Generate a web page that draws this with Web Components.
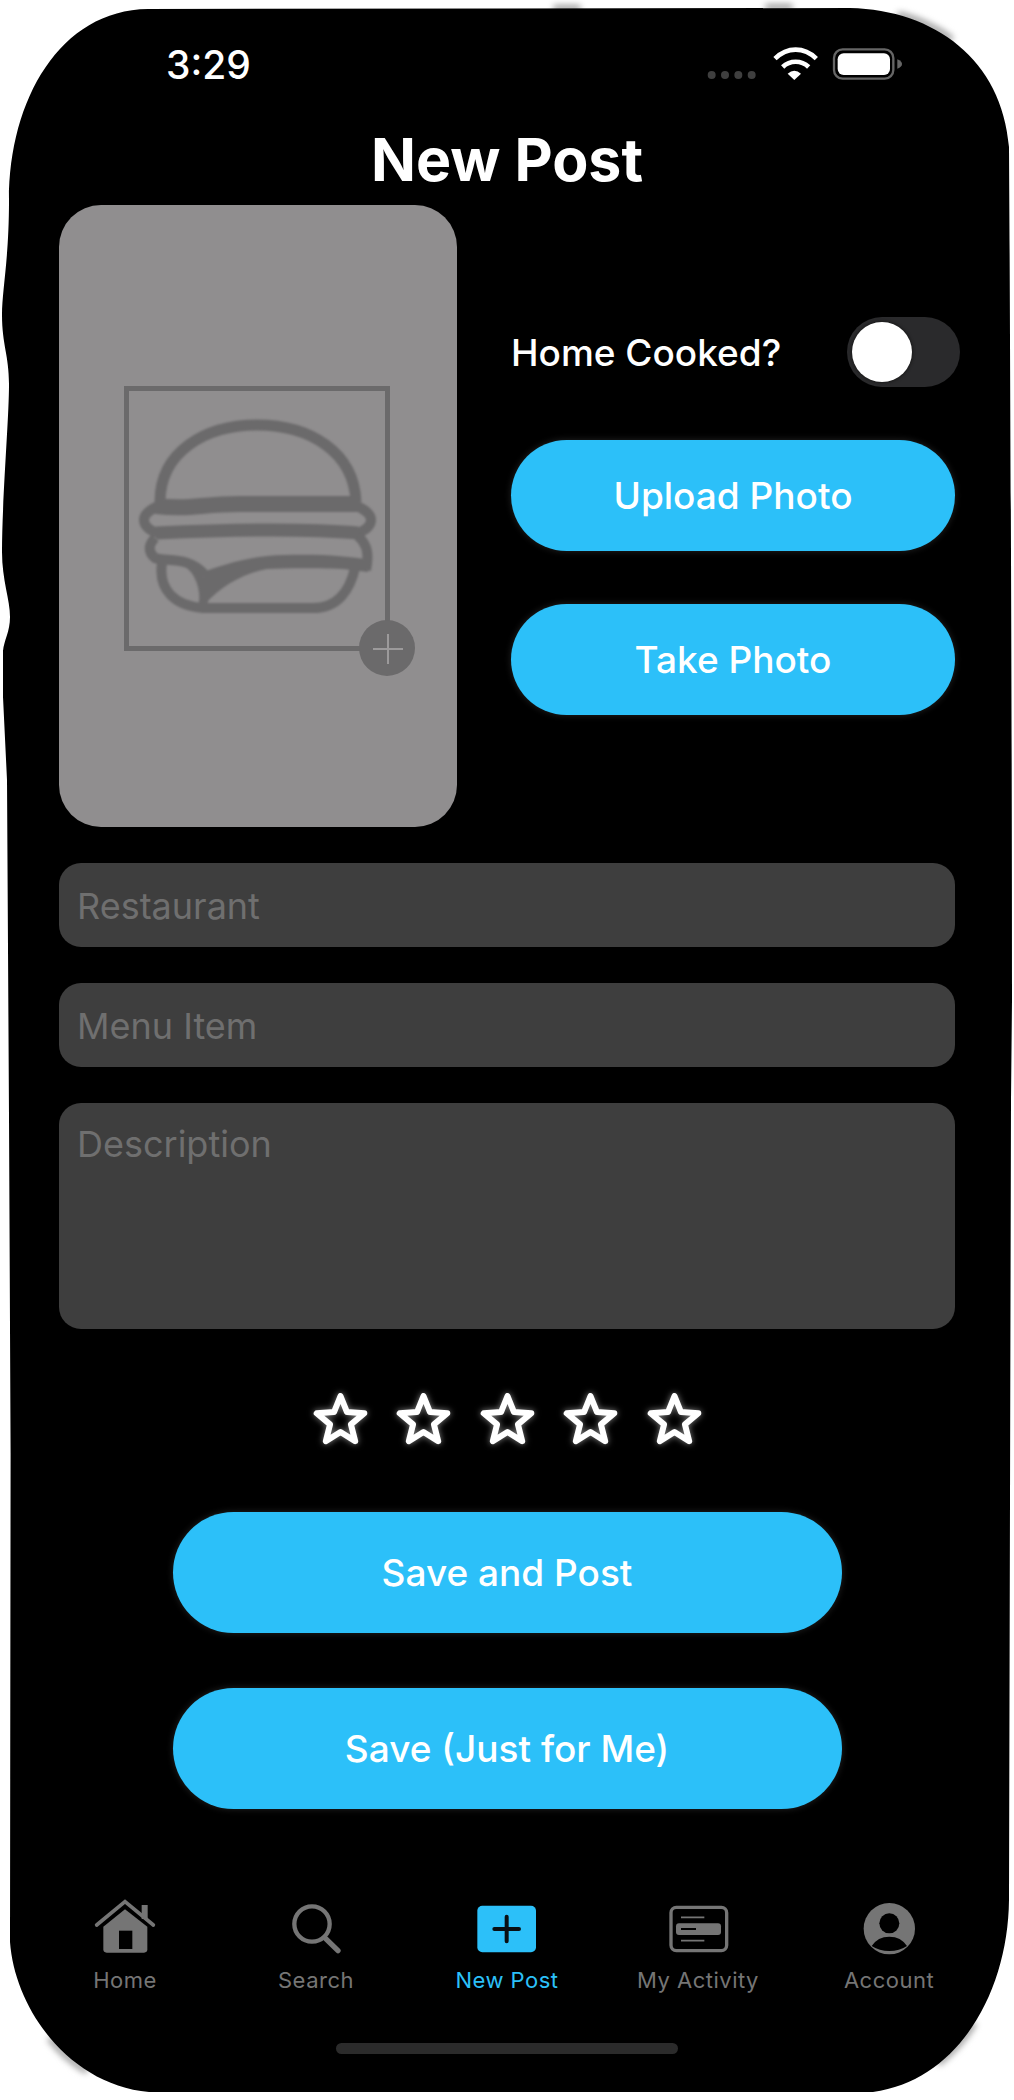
<!DOCTYPE html>
<html lang="en">

<head>
  <meta charset="UTF-8">
  <meta name="viewport" content="width=device-width, initial-scale=1.0">
  <title>New Post</title>
<style>
  body {
    margin: 0;
    background: #fff;
    font-family: Inter, "Noto Sans", sans-serif;
  }
</style>
</head>

<body>

<template id="phoneshadow">
  <style>
    :host {
      position: absolute;
      left: 0;
      top: 0;
    }
    svg { display: block; }
  </style>
  <svg width="1014" height="2100" viewBox="0 0 1014 2100" fill="none" stroke="#9a9a9a" stroke-width="6" stroke-linecap="round">
    <g style="filter: blur(3px)">
      <path d="M556 8H578M768 7H790"/>
      <path d="M900 15C920 20 936 28 950 38"/>
      <path d="M51 2040C60 2052 72 2062 85 2070"/>
      <path d="M940 2062C952 2052 964 2040 973 2025"/>
    </g>
  </svg>
</template>

<template id="phoneframe">
  <style>
    :host {
      display: block;
      position: relative;
      width: 1014px;
      height: 2100px;
      overflow: hidden;
      background: #000;
      color: #fff;
      clip-path: path("M148 9 L850 8 C935 10 1002 60 1009 147 C1010 300 1012 700 1012 1000 L1011 1100 L1009 1900 C1008 1990 960 2080 873 2092 L149 2092 C70 2085 15 2010 10 1942 L10.6 1453 L9 1117 L7 780 L3 697 L3 651 C4 640 10 632 10 617 C10 600 2 580 2 552 C2 500 9 420 9 384 C9 355 2 345 2 315 C2 290 9 260 9 200 C9 100 60 10 148 9 Z");
    }
  </style>
  <slot></slot>
</template>

<template id="statusbar">
  <style>
    :host {
      display: flex;
      justify-content: space-between;
      height: 90px;
      padding: 44px 90px 0 166px;
      box-sizing: border-box;
    }
    .time {
      font-size: 39px;
      font-weight: 500;
      line-height: 42px;
    }
    svg { display: block; }
  </style>
  <div class="time"><slot></slot></div>
  <svg width="230" height="42" viewBox="0 0 690 126" fill="none">
    <g fill="#3f3f3f">
      <circle cx="53" cy="93" r="12"/><circle cx="93" cy="93" r="12"/>
      <circle cx="133" cy="93" r="12"/><circle cx="173" cy="93" r="12"/>
    </g>
    <g stroke="#fff" stroke-width="14">
      <path d="M243 44C280 8 330 8 367 44"/>
      <path d="M266 69C288 48 322 48 344 69"/>
    </g>
    <path d="M281 89Q301 72 321 89L301 108Z" fill="#fff"/>
    <rect x="420" y="16" width="178" height="88" rx="26" stroke="#666" stroke-width="7"/>
    <rect x="431" y="28" width="157" height="65" rx="18" fill="#fff"/>
    <path d="M610 46C620 50 624 56 624 60C624 66 620 70 610 74Z" fill="#666"/>
  </svg>
</template>

<template id="pagetitle">
  <style>
    :host {
      display: block;
      height: 115px;
      text-align: center;
      font-size: 59px;
      font-weight: 700;
      line-height: 70px;
      padding-top: 35px;
      box-sizing: border-box;
    }
  </style>
  <slot></slot>
</template>

<template id="postform">
  <style>
    :host {
      display: flex;
      flex-direction: column;
      padding: 0 59px;
    }
    .top {
      display: flex;
      justify-content: space-between;
    }
    .side {
      display: flex;
      flex-direction: column;
      width: 444px;
      padding-top: 112px;
      gap: 53px;
    }
    .fields {
      display: flex;
      flex-direction: column;
      gap: 36px;
      margin-top: 36px;
    }
    .save {
      display: flex;
      flex-direction: column;
      align-items: center;
      gap: 55px;
      margin-top: 67px;
    }
  </style>
  <div class="top">
    <slot name="photo"></slot>
    <div class="side"><slot name="side"></slot></div>
  </div>
  <div class="fields"><slot name="field"></slot></div>
  <slot name="rating"></slot>
  <div class="save"><slot name="save"></slot></div>
</template>

<template id="photopicker">
  <style>
    :host {
      display: block;
      width: 398px;
      height: 622px;
      border-radius: 42px;
      background: #908e8f;
      overflow: hidden;
    }
    svg { display: block; }
    .burger { filter: blur(.8px); }
  </style>
  <svg width="398" height="622" viewBox="59 205 398 622" fill="none" stroke="#6b6a6b">
    <rect x="126.500" y="388.500" width="261" height="260" stroke-width="5"/>
    <g class="burger">
      <path d="M160 502C160 452 205 425 257 425C310 425 354 452 356 502" stroke-width="11"/>
      <path d="M158 506C150 510 144 514 144 520C144 526 150 531 158 533M357 506C365 510 371 514 371 520C371 526 365 531 357 533" stroke-width="10" stroke-linecap="round"/>
      <path d="M156 506C190 510 200 504 240 504H358" stroke-width="16"/>
      <path d="M156 533C220 530 300 528 358 533" stroke-width="13"/>
      <path d="M155 538C148 545 148 552 155 558C165 562 190 556 205 575" stroke-width="10"/>
      <path d="M358 536C368 545 369 555 366 570" stroke-width="10"/>
      <path d="M203 572C220 566 250 555 285 555C320 554 350 556 369 560L368 572L343 569C310 568 290 568 267 569C245 573 222 585 205 604Z" fill="#6b6a6b" stroke="none"/>
      <path d="M162 563C158 590 175 606 203 608H313C338 608 350 590 355 568" stroke-width="10"/>
      <path d="M186 562C200 570 206 590 203 606" stroke-width="9"/>
    </g>
    <circle cx="387" cy="648" r="28" fill="#6b6a6b" stroke="none"/>
    <path d="M373 649H403M388 634V664" stroke="#9c9a9b" stroke-width="2"/>
  </svg>
</template>

<template id="toggleswitch">
  <style>
    :host {
      display: flex;
      align-items: center;
      justify-content: space-between;
      height: 70px;
      margin-right: -5px;
      font-size: 37px;
      font-weight: 500;
    }
    .track {
      width: 113px;
      height: 70px;
      border-radius: 35px;
      background: #2a2a2c;
      box-sizing: border-box;
      padding: 5px;
    }
    .knob {
      width: 60px;
      height: 60px;
      border-radius: 50%;
      background: #fff;
      box-shadow: 0 0 3px 1px #1a1a1a;
    }
  </style>
  <slot></slot>
  <div class="track"><div class="knob"></div></div>
</template>

<template id="pillbutton">
  <style>
    :host {
      display: flex;
      align-items: center;
      justify-content: center;
      height: 111px;
      border-radius: 56px;
      background: #2cc0f9;
      box-shadow: 0 0 7px rgba(255, 255, 255, .14);
      font-size: 37px;
      font-weight: 500;
    }
    :host([wide]) {
      width: 669px;
      height: 121px;
      border-radius: 61px;
    }
  </style>
  <slot></slot>
</template>

<template id="textfield">
  <style>
    :host {
      display: block;
      height: 84px;
      padding: 0 18px;
      box-sizing: border-box;
      border-radius: 22px;
      background: #3e3e3e;
      color: #6f6f6f;
      font-size: 36px;
      line-height: 86px;
    }
    :host([multi]) {
      height: 226px;
      line-height: 82px;
    }
  </style>
  <slot></slot>
</template>

<template id="starrating">
  <style>
    :host {
      display: flex;
      justify-content: center;
      gap: 28.500px;
      margin-top: 63px;
      height: 53px;
    }
    svg {
      display: block;
      filter: drop-shadow(0 0 3px rgba(255, 255, 255, .5));
    }
  </style>
</template>

<template id="tabbar">
  <style>
    :host {
      display: grid;
      grid-template-columns: repeat(5, 191px);
      justify-content: center;
      margin-top: 87px;
    }
  </style>
  <slot></slot>
</template>

<template id="tabitem">
  <style>
    :host {
      display: flex;
      flex-direction: column;
      align-items: center;
      gap: 12px;
      color: #757575;
      font-size: 22px;
      line-height: 24px;
      letter-spacing: .5px;
    }
    :host([active]) { color: #2cc0f9; }
    ::slotted(svg) { display: block; }
  </style>
  <slot name="icon"></slot>
  <slot></slot>
</template>

<template id="homeindicator">
  <style>
    :host {
      display: block;
      width: 342px;
      height: 11px;
      margin: 51px auto 0;
      border-radius: 6px;
      background: #2b2b2b;
    }
  </style>
</template>

<phone-shadow></phone-shadow>
<phone-frame>
  <status-bar>3:29</status-bar>
  <page-title>New Post</page-title>
  <post-form>
    <photo-picker slot="photo"></photo-picker>
    <toggle-switch slot="side">Home Cooked?</toggle-switch>
    <pill-button slot="side">Upload Photo</pill-button>
    <pill-button slot="side">Take Photo</pill-button>
    <text-field slot="field">Restaurant</text-field>
    <text-field slot="field">Menu Item</text-field>
    <text-field slot="field" multi>Description</text-field>
    <star-rating slot="rating"></star-rating>
    <pill-button slot="save" wide>Save and Post</pill-button>
    <pill-button slot="save" wide>Save (Just for Me)</pill-button>
  </post-form>
  <tab-bar>
    <tab-item>
      <svg slot="icon" width="66" height="60" viewBox="0 0 198 180" fill="#757575">
        <path d="M14 87L99 17L184 87" fill="none" stroke="#757575" stroke-width="11" stroke-linecap="round"/>
        <rect x="149" y="27" width="18" height="42"/>
        <path d="M34 92L99 40L166 92V160Q166 170 156 170H44Q34 170 34 160Z"/>
        <rect x="81" y="104" width="40" height="55" fill="#000"/>
      </svg>
      Home
    </tab-item>
    <tab-item>
      <svg slot="icon" width="66" height="60" viewBox="0 0 198 180" fill="none" stroke="#757575">
        <circle cx="87" cy="84" r="53" stroke-width="13"/>
        <path d="M128 128L165 164" stroke-width="16" stroke-linecap="round"/>
      </svg>
      Search
    </tab-item>
    <tab-item active>
      <svg slot="icon" width="66" height="60" viewBox="0 0 198 180">
        <rect x="10" y="29" width="176" height="140" rx="15" fill="#2cc0f9"/>
        <path d="M61 99H135M98 62V136" stroke="#0a0f12" stroke-width="12" stroke-linecap="round"/>
      </svg>
      New Post
    </tab-item>
    <tab-item>
      <svg slot="icon" width="66" height="60" viewBox="0 0 198 180" fill="none" stroke="#757575">
        <rect x="18" y="34" width="167" height="130" rx="16" stroke-width="10"/>
        <path d="M48 64H118M48 134H118" stroke-width="5"/>
        <rect x="33" y="82" width="135" height="35" rx="9" fill="#757575" stroke="none"/>
        <path d="M48 99H93" stroke="#000" stroke-width="6"/>
      </svg>
      My Activity
    </tab-item>
    <tab-item>
      <svg slot="icon" width="66" height="60" viewBox="0 0 198 180">
        <circle cx="100" cy="98" r="77" fill="#757575"/>
        <circle cx="100" cy="82" r="30" fill="#000"/>
        <path d="M47 150Q65 122 100 122Q135 122 153 150Q130 165 100 165Q70 165 47 150Z" fill="#000"/>
      </svg>
      Account
    </tab-item>
  </tab-bar>
  <home-indicator></home-indicator>
</phone-frame>

<script>
  const fromTemplate = (name, id) => {
    customElements.define(name, class extends HTMLElement {
      constructor() {
        super();
        this.attachShadow({ mode: "open" });
        this.shadowRoot.appendChild(document.querySelector(id).content.cloneNode(true));
      }
    });
  };

  fromTemplate("phone-shadow", "#phoneshadow");
  fromTemplate("phone-frame", "#phoneframe");
  fromTemplate("status-bar", "#statusbar");
  fromTemplate("page-title", "#pagetitle");
  fromTemplate("post-form", "#postform");
  fromTemplate("photo-picker", "#photopicker");
  fromTemplate("toggle-switch", "#toggleswitch");
  fromTemplate("pill-button", "#pillbutton");
  fromTemplate("text-field", "#textfield");
  fromTemplate("tab-bar", "#tabbar");
  fromTemplate("tab-item", "#tabitem");
  fromTemplate("home-indicator", "#homeindicator");

  // five empty stars, all the same path
  customElements.define("star-rating", class extends HTMLElement {
    constructor() {
      super();
      this.attachShadow({ mode: "open" });
      this.shadowRoot.appendChild(document.querySelector("#starrating").content.cloneNode(true));
      for (let i = 0; i < 5; i++) {
        this.shadowRoot.appendChild(document.createRange().createContextualFragment(
          '<svg width="55" height="53" viewBox="0 0 55 53" fill="none" stroke="#fff" stroke-width="6" stroke-linejoin="round">' +
          '<path d="M27.5 4L33.970 20.100L51.300 21.300L37.960 32.400L42.200 49.200L27.500 40L12.800 49.200L17.040 32.400L3.700 21.300L21.030 20.100Z"/></svg>'
        ));
      }
    }
  });
</script>

</body>

</html>
